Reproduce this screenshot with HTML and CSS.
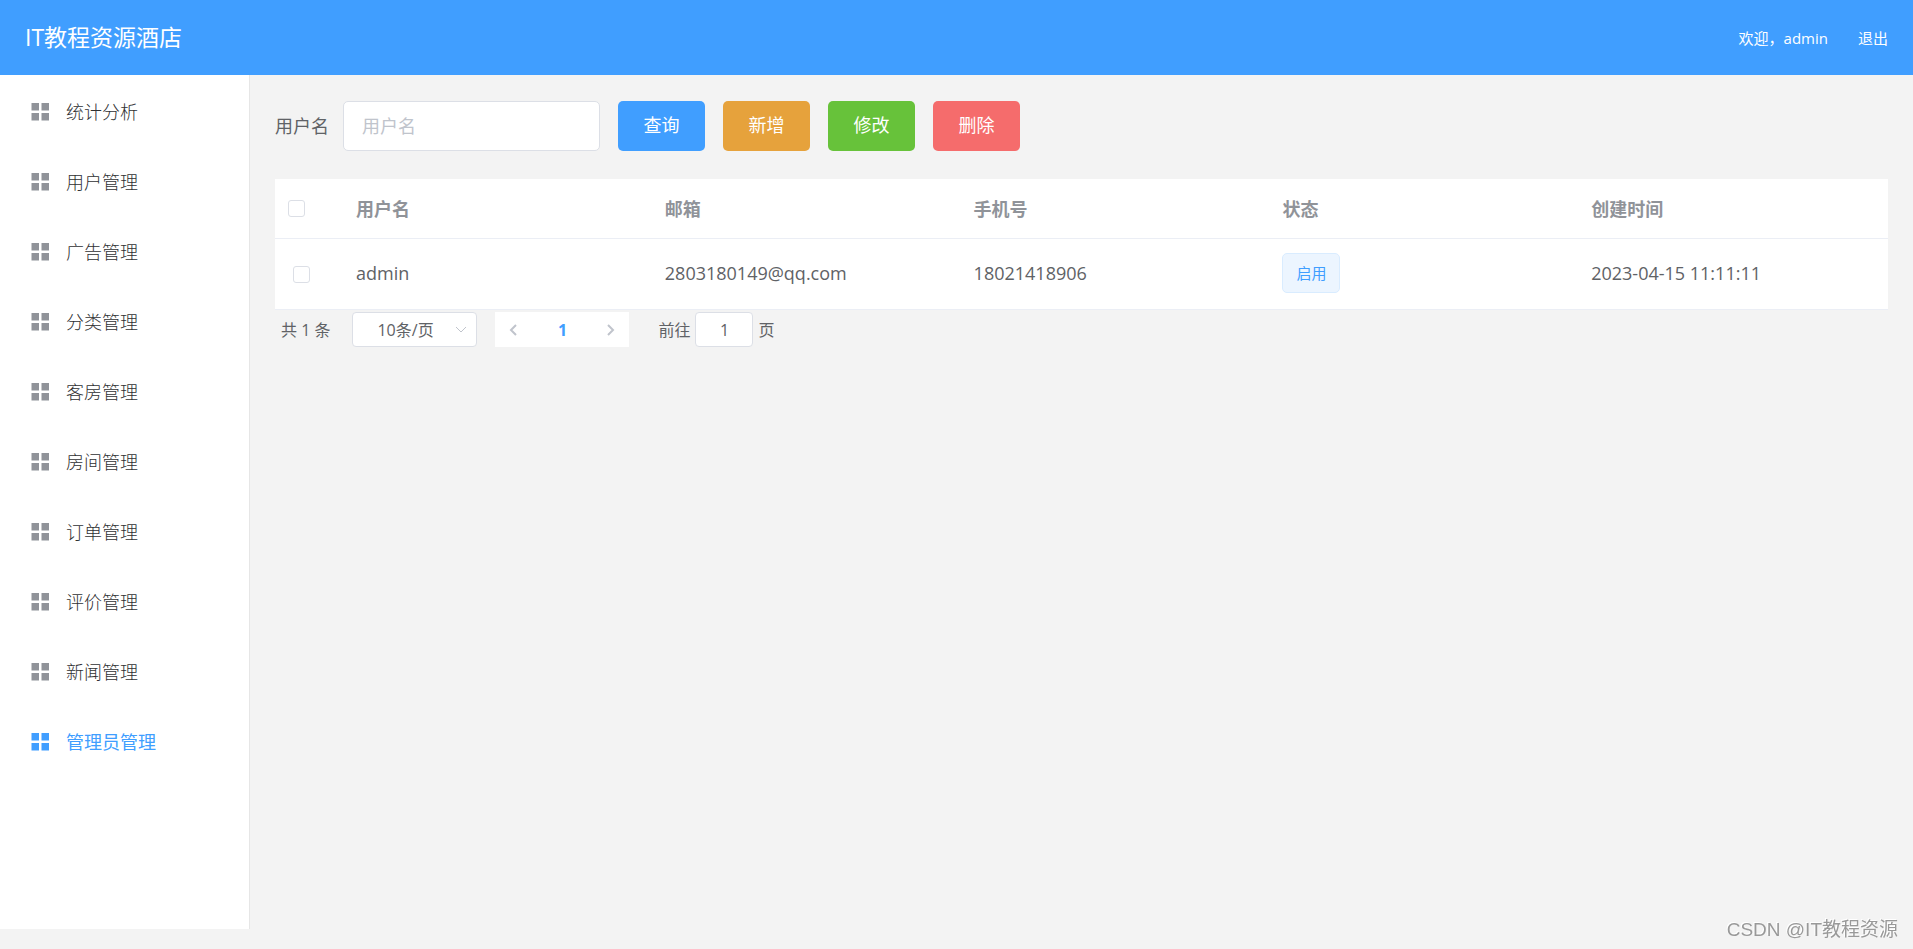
FILE: index.html
```html
<!DOCTYPE html>
<html lang="zh-CN">
<head>
<meta charset="utf-8">
<title>IT教程资源酒店</title>
<link rel="stylesheet" href="styles.css">
</head>
<body>
<svg class="defs" width="0" height="0" aria-hidden="true">
  <symbol id="menu-icon" viewBox="0 0 18 18"><path d="M.5 0H8v7.500H.5zM10.500 0H18v7.500h-7.500zM.5 10H8v7.500H.5zM10.500 10H18v7.500h-7.500z"/></symbol>
</svg>
<header class="header">
  <h1 class="brand">IT教程资源酒店</h1>
  <div class="account"><span>欢迎，admin</span><a href="#logout">退出</a></div>
</header>
<div class="layout">
  <nav class="sidebar">
    <ul class="menu">
      <li><a class="menu-item" href="#stats"><svg class="menu-icon"><use href="#menu-icon"/></svg>统计分析</a></li>
      <li><a class="menu-item" href="#users"><svg class="menu-icon"><use href="#menu-icon"/></svg>用户管理</a></li>
      <li><a class="menu-item" href="#ads"><svg class="menu-icon"><use href="#menu-icon"/></svg>广告管理</a></li>
      <li><a class="menu-item" href="#categories"><svg class="menu-icon"><use href="#menu-icon"/></svg>分类管理</a></li>
      <li><a class="menu-item" href="#suites"><svg class="menu-icon"><use href="#menu-icon"/></svg>客房管理</a></li>
      <li><a class="menu-item" href="#rooms"><svg class="menu-icon"><use href="#menu-icon"/></svg>房间管理</a></li>
      <li><a class="menu-item" href="#orders"><svg class="menu-icon"><use href="#menu-icon"/></svg>订单管理</a></li>
      <li><a class="menu-item" href="#reviews"><svg class="menu-icon"><use href="#menu-icon"/></svg>评价管理</a></li>
      <li><a class="menu-item" href="#news"><svg class="menu-icon"><use href="#menu-icon"/></svg>新闻管理</a></li>
      <li><a class="menu-item active" href="#admins" aria-current="page"><svg class="menu-icon"><use href="#menu-icon"/></svg>管理员管理</a></li>
    </ul>
  </nav>
  <main class="main">
    <form class="toolbar">
      <label class="field-label" for="username">用户名</label>
      <input class="field" id="username" type="text" placeholder="用户名">
      <div class="actions">
        <button class="btn primary" type="button">查询</button>
        <button class="btn warning" type="button">新增</button>
        <button class="btn success" type="button">修改</button>
        <button class="btn danger" type="button">删除</button>
      </div>
    </form>
    <table class="table">
      <thead>
        <tr>
          <th class="check-col"><input class="check" type="checkbox" aria-label="全选"></th>
          <th>用户名</th><th>邮箱</th><th>手机号</th><th>状态</th><th>创建时间</th>
        </tr>
      </thead>
      <tbody>
        <tr>
          <td class="check-col"><input class="check" type="checkbox" aria-label="选择 admin"></td>
          <td>admin</td><td>2803180149@qq.com</td><td>18021418906</td>
          <td><span class="tag">启用</span></td><td>2023-04-15 11:11:11</td>
        </tr>
      </tbody>
    </table>
    <div class="pagination">
      <span class="total">共 1 条</span>
      <div class="size">
        <select class="size-select" aria-label="每页条数"><option>10条/页</option><option>20条/页</option></select>
        <svg class="size-arrow" viewBox="0 0 12 8"><path d="M1 1l5 5 5-5"/></svg>
      </div>
      <div class="pager">
        <button class="page-btn" type="button" aria-label="上一页"><svg class="arrow" viewBox="0 0 8 12"><path d="M7 1L2 6l5 5"/></svg></button>
        <button class="page-btn current" type="button">1</button>
        <button class="page-btn" type="button" aria-label="下一页"><svg class="arrow" viewBox="0 0 8 12"><path d="M1 1l5 5-5 5"/></svg></button>
      </div>
      <label class="jump">前往<input class="jump-input" type="text" value="1">页</label>
    </div>
  </main>
</div>
<div class="watermark">CSDN @IT教程资源</div>
</body>
</html>
```
FILE: styles.css
```css
* { box-sizing: border-box; }
body {
  margin: 0;
  min-height: 100vh;
  background: #f3f3f3;
  color: #606266;
  font: 18px/24px "Open Sans", "Noto Sans CJK SC", sans-serif;
}
input, button, select { font: inherit; color: inherit; margin: 0; }
button { cursor: pointer; }
a { color: inherit; text-decoration: none; }
.defs { position: absolute; }

.header {
  display: flex;
  align-items: center;
  justify-content: space-between;
  height: 75px;
  padding: 0 25px 2px;
  background: #409eff;
  color: #fff;
}
.brand { margin: 0; font-size: 23px; font-weight: 400; line-height: 30px; }
.account { display: flex; gap: 30px; padding-top: 2px; font-size: 15px; }

.layout { display: flex; align-items: flex-start; }
.sidebar {
  flex: 0 0 250px;
  min-height: calc(100vh - 95px);
  background: #fff;
  border-right: 1px solid #e6e6e6;
}
.menu { margin: 0; padding: 2px 0 0; list-style: none; }
.menu-item {
  display: flex;
  align-items: center;
  gap: 17px;
  height: 70px;
  padding: 0 31px;
  color: #303133;
  font-weight: 300;
}
.menu-icon { width: 18px; height: 18px; fill: #909399; }
.menu-item.active { color: #409eff; font-weight: 400; }
.active .menu-icon { fill: #409eff; }

.main { flex: 1; min-width: 0; padding: 26px 25px; }
.toolbar { display: flex; align-items: center; margin-bottom: 28px; }
.field-label { margin-right: 14px; }
.field {
  width: 257px;
  height: 50px;
  padding: 0 18px;
  background: #fff;
  border: 1px solid #dcdfe6;
  border-radius: 5px;
}
.field::placeholder { color: #c0c4cc; opacity: 1; }
.actions { display: flex; gap: 18px; margin-left: 18px; }
.btn {
  width: 87px;
  height: 50px;
  padding: 0 0 2px;
  border: 0;
  border-radius: 5px;
  color: #fff;
}
.primary { background: #409eff; }
.warning { background: #e6a23c; }
.success { background: #67c23a; }
.danger { background: #f56c6c; }

.table { width: 100%; table-layout: fixed; border-collapse: separate; border-spacing: 0; background: #fff; }
.table th, .table td {
  padding: 0 12px;
  text-align: left;
  border-bottom: 1px solid #ebeef5;
}
.table th { height: 60px; color: #909399; font-weight: 700; }
.table td { height: 71px; padding-bottom: 2px; }
.table .check-col { width: 69px; padding: 0 13px; }
.table td.check-col { padding-left: 18px; }
.check {
  display: block;
  appearance: none;
  width: 17px;
  height: 17px;
  background: #fff;
  border: 1px solid #dcdfe6;
  border-radius: 3px;
}
.check:checked { background: #409eff; border-color: #409eff; }
.tag {
  display: inline-block;
  padding: 0 13px;
  background: #ecf5ff;
  border: 1px solid #d9ecff;
  border-radius: 5px;
  color: #409eff;
  font-size: 15px;
  line-height: 38px;
}

.pagination { display: flex; align-items: center; padding: 2px 6px; font-size: 16px; }
.total { margin-right: 22px; }
.size { position: relative; width: 125px; }
.size-select {
  display: block;
  appearance: none;
  width: 100%;
  height: 35px;
  padding: 0 24px;
  background: #fff;
  border: 1px solid #dcdfe6;
  border-radius: 4px;
}
.size-arrow {
  position: absolute;
  top: 14px;
  right: 10px;
  width: 12px;
  height: 8px;
  fill: none;
  stroke: #c0c4cc;
  pointer-events: none;
}
.pager { display: flex; margin: 0 29px 0 18px; background: #fff; }
.page-btn {
  display: grid;
  place-items: center;
  width: 36px;
  height: 35px;
  padding: 0;
  border: 0;
  background: none;
}
.page-btn.current { width: 62px; color: #409eff; font-weight: 700; }
.arrow { width: 8px; height: 12px; fill: none; stroke: #c0c4cc; stroke-width: 2; }
.jump { display: flex; align-items: center; gap: 5px; }
.jump-input {
  width: 58px;
  height: 35px;
  padding: 0 4px;
  text-align: center;
  background: #fff;
  border: 1px solid #dcdfe6;
  border-radius: 4px;
}

.watermark {
  position: fixed;
  right: 15px;
  bottom: 6px;
  color: #999;
  font: 19px/26px "Liberation Sans", "Noto Sans CJK SC", sans-serif;
  text-shadow: -1px -1px 0 #fff;
}
```
